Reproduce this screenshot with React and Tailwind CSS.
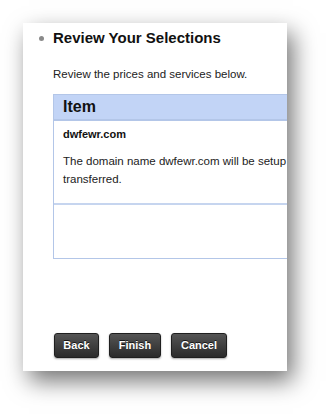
import React from 'react';

// Botão escuro do assistente (Back / Finish / Cancel)
const WizardButton = ({ label, width }) => (
    <button
        type="button"
        className={`${width} h-[25px] rounded-[3px] border border-[#1f1f1f] bg-gradient-to-b from-[#555555] to-[#2b2b2b] text-white text-[11px] font-bold leading-none shadow-[0_1px_2px_rgba(0,0,0,0.35)] [text-shadow:0_-1px_0_rgba(0,0,0,0.7)]`}
    >
        {label}
    </button>
);

const App = () => {
    return (
        <div
            className="w-[330px] h-[414px] bg-white pt-[23px] pl-[23px]"
            style={{ fontFamily: '"Liberation Sans", Arial, sans-serif' }}
        >
            {/* Painel principal com sombra */}
            <div className="w-[264px] h-[348px] bg-white overflow-hidden shadow-[6px_10px_22px_rgba(0,0,0,0.55)] flex flex-col">
                {/* Cabeçalho */}
                <div className="flex items-center pt-[6px] pl-[16px]">
                    <span className="w-[5px] h-[5px] rounded-full bg-[#8a8a8a] mr-[9px] mt-[1px]" />
                    <h2 className="text-[15px] leading-[18px] font-bold text-[#111]">Review Your Selections</h2>
                </div>

                <p className="mt-[20px] ml-[30px] text-[11.5px] leading-[14px] text-[#222]">
                    Review the prices and services below.
                </p>

                {/* Tabela de itens */}
                <div className="mt-[13px] ml-[30px] w-[300px] shrink-0 border border-[#b3c6e8]">
                    <div className="h-[26px] bg-[#c2d4f6] border-b-2 border-[#b3c6e8] flex items-center pl-[9px]">
                        <span className="text-[16px] font-bold text-[#111]">Item</span>
                    </div>
                    <div className="pl-[9px] pr-[4px] pt-[6px] pb-[15px] border-b-2 border-[#c6d5ef]">
                        <p className="text-[11px] leading-[14px] font-bold text-[#111]">dwfewr.com</p>
                        <p className="mt-[11px] text-[11.5px] leading-[18px] text-[#222] w-[236px]">
                            The domain name dwfewr.com will be setup transferred.
                        </p>
                    </div>
                    <div className="h-[53px]" />
                </div>

                {/* Botões */}
                <div className="mt-auto mb-[13px] ml-[31px] flex gap-[10px]">
                    <WizardButton label="Back" width="w-[45px]" />
                    <WizardButton label="Finish" width="w-[52px]" />
                    <WizardButton label="Cancel" width="w-[56px]" />
                </div>
            </div>
        </div>
    );
};

export default App;
